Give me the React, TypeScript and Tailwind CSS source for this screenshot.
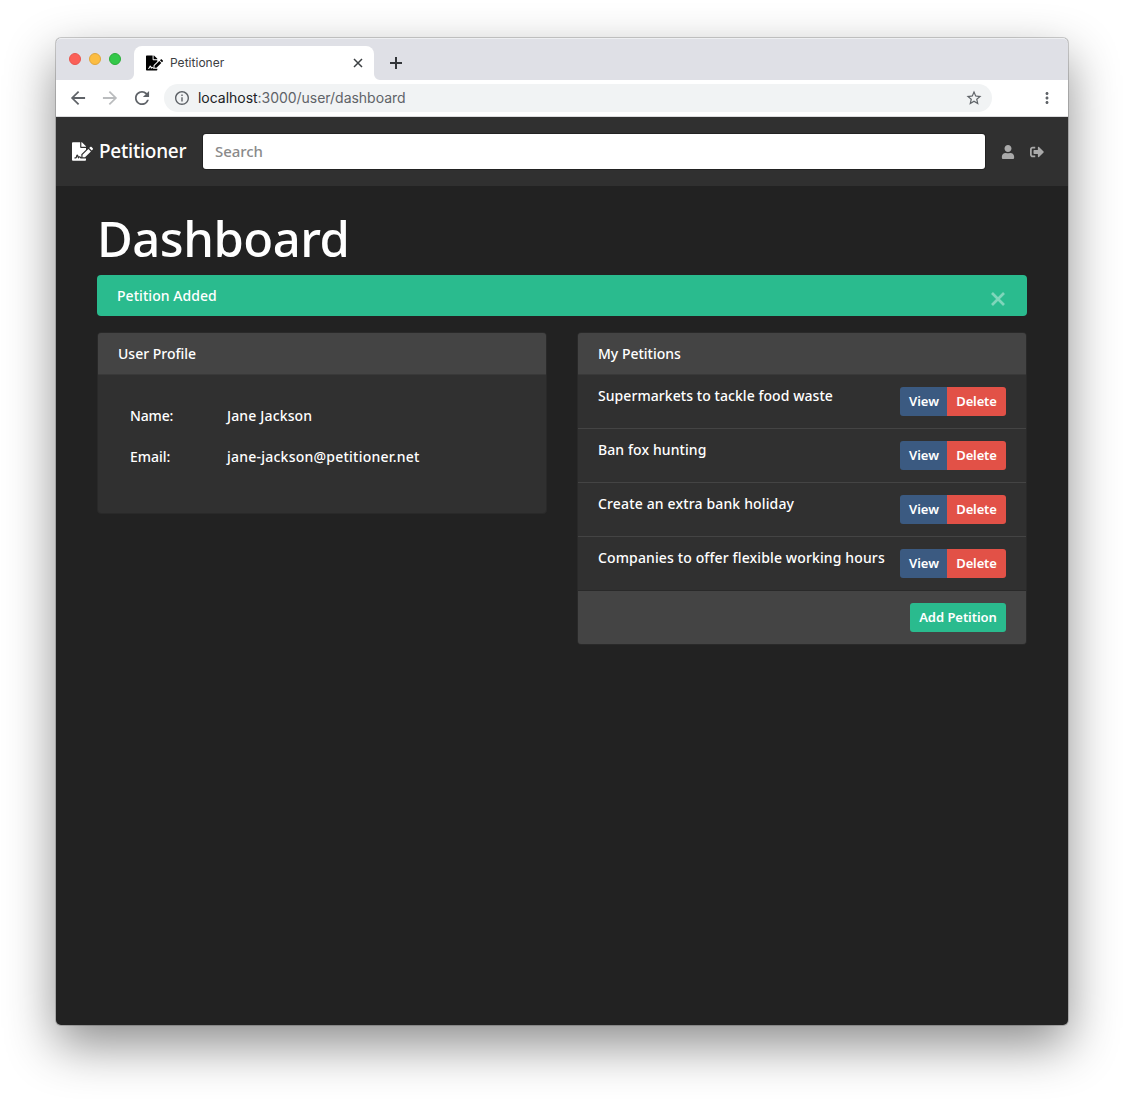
import React from "react";
import { FaFileSignature, FaSignOutAlt, FaUser } from "react-icons/fa";
import { MdArrowBack, MdArrowForward, MdRefresh, MdOutlineInfo, MdStarBorder, MdMoreVert } from "react-icons/md";

const petitions = [
  { title: "Supermarkets to tackle food waste", tracking: "tracking-[0.06px]" },
  { title: "Ban fox hunting", tracking: "tracking-[0.1px]" },
  { title: "Create an extra bank holiday", tracking: "tracking-[0.15px]" },
  { title: "Companies to offer flexible working hours", tracking: "tracking-[0.13px]" },
];

function TabStrip() {
  return (
    <div className="flex h-[42px] items-end rounded-t-[5px] bg-[#dfe0e6] font-normal shadow-[inset_0_1px_0_#eeeff2]">
      <div className="flex h-full w-[78px] items-center gap-2 pl-[13px]">
        <span className="size-3 rounded-full border border-[#e8564f] bg-[#fb6058]" />
        <span className="size-3 rounded-full border border-[#e0a63c] bg-[#fcbd42]" />
        <span className="size-3 rounded-full border border-[#2bad3a] bg-[#34c84a]" />
      </div>
      <div className="relative flex h-[34px] w-[240px] items-center rounded-t-lg bg-white pr-[11px] pl-3">
        <svg className="absolute bottom-0 -left-1.5 size-1.5" viewBox="0 0 6 6" fill="#fff"><path d="M6 0v6H0a6 6 0 0 0 6-6z" /></svg>
        <svg className="absolute -right-1.5 bottom-0 size-1.5" viewBox="0 0 6 6" fill="#fff"><path d="M0 0v6h6a6 6 0 0 1-6-6z" /></svg>
        <FaFileSignature className="h-4 w-[17px] shrink-0 text-black" />
        <span className="ml-[7px] flex-1 font-['Inter'] text-xs leading-4 tracking-[0.02px] text-[#3c4043]">Petitioner</span>
        <svg className="size-[10px]" viewBox="0 0 10 10" stroke="#3c4043" strokeWidth="1.5">
          <path d="M1 1l8 8M9 1L1 9" />
        </svg>
      </div>
      <svg className="mb-[11px] ml-4 size-3" viewBox="0 0 12 12" stroke="#33363a" strokeWidth="2">
        <path d="M6 0v12M0 6h12" />
      </svg>
    </div>
  );
}

function Toolbar() {
  return (
    <div className="flex h-[37px] items-center border-b border-[#dcdcde] bg-white pl-[13px] font-normal text-[#5f6368]">
      <MdArrowBack className="size-[18px] scale-[1.18]" />
      <MdArrowForward className="ml-[14px] size-[18px] scale-[1.18] text-[#babcbe]" />
      <MdRefresh className="ml-[14px] size-[18px] scale-[1.18]" />
      <div className="ml-[13px] flex h-7 w-[828px] items-center rounded-full bg-[#f1f3f4] pr-[9px] pl-[10px]">
        <MdOutlineInfo className="size-4 scale-105" />
        <span className="ml-2 flex-1 font-['Inter'] text-sm leading-5 tracking-[-0.03px]">
          <span className="text-[#202124]">localhost</span>:3000/user/dashboard
        </span>
        <MdStarBorder className="size-[18px]" />
      </div>
      <MdMoreVert className="ml-[46px] size-[18px]" />
    </div>
  );
}

function CardHeader({ children }: { children: React.ReactNode }) {
  return (
    <div className="h-[42px] rounded-t-[3px] border-b border-[#393939] bg-[#444] px-5 pt-[10px] leading-[22px]">
      {children}
    </div>
  );
}

export default function App() {
  return (
    <div className="h-[1099px] w-[1124px] overflow-hidden bg-white px-14 pt-[38px] font-['Noto_Sans',sans-serif] text-[14px] font-medium text-white">
      <div className="flex h-[987px] w-[1012px] flex-col rounded-[5px] bg-[#222] shadow-[0_0_0_1px_rgba(0,0,0,0.18),0_20px_50px_rgba(0,0,0,0.45)]">
        <TabStrip />
        <Toolbar />
        <nav className="flex h-[69px] items-center bg-[#303030] px-4">
          <a className="flex w-[115px] items-center whitespace-nowrap">
            <FaFileSignature className="-mt-px h-[19px] w-[21px] shrink-0" />
            <span className="-mt-[2px] ml-[6px] text-[19px] leading-6 tracking-[-0.25px]">Petitioner</span>
          </a>
          <div className="ml-4 h-[35px] w-[782px] rounded-[3px] bg-white px-3 pt-[5px] text-[15px] leading-6 tracking-[-0.05px] text-[#8a8a8a] shadow-[0_0_0_1px_#222]">
            Search
          </div>
          <FaUser className="ml-4 size-[14px] text-[#a9a9a9]" />
          <FaSignOutAlt className="ml-[15px] size-[14px] text-[#a9a9a9]" />
        </nav>
        <main className="px-[41px] pt-[23px]">
          <h1 className="h-[66px] text-[49px] leading-[58px] font-medium tracking-[-0.5px]">Dashboard</h1>
          <div className="flex h-[41px] items-start justify-between rounded bg-[#2abb8e] pr-[22px] pl-5">
            <span className="pt-[10px] leading-[22px] tracking-[0.05px]">Petition Added</span>
            <svg className="mt-[17px] size-[14px]" viewBox="0 0 14 14" stroke="#7fd6bb" strokeWidth="2.7">
              <path d="M1 1l12 12M13 1L1 13" />
            </svg>
          </div>
          <div className="mt-4 flex items-start gap-[30px]">
            <section className="h-[182px] w-[450px] rounded border border-[#292929] bg-[#303030]">
              <CardHeader>User Profile</CardHeader>
              <dl className="grid grid-cols-[97px_1fr] px-8 pt-[30px] leading-[22px]">
                <dt className="h-[41px] tracking-[-0.15px]">Name:</dt>
                <dd className="h-[41px] tracking-[0.15px]">Jane Jackson</dd>
                <dt>Email:</dt>
                <dd className="tracking-[0.23px]">jane-jackson@petitioner.net</dd>
              </dl>
            </section>
            <section className="w-[450px] rounded border border-[#292929] bg-[#303030]">
              <CardHeader>My Petitions</CardHeader>
              <ul>
                {petitions.map((p) => (
                  <li key={p.title} className="flex h-[54px] justify-between border-b border-[#444] pt-3 pr-5 pl-5 last:border-[#292929]">
                    <span className={`-mt-[2px] leading-[22px] whitespace-nowrap ${p.tracking}`}>{p.title}</span>
                    <div className="flex h-[29px] text-[13px] leading-[27px]">
                      <button className="w-[47px] rounded-l-[3px] bg-[#3b5a81] pl-px font-semibold tracking-[-0.05px]">View</button>
                      <button className="w-[59px] rounded-r-[3px] bg-[#e25147] font-semibold tracking-[-0.15px]">Delete</button>
                    </div>
                  </li>
                ))}
              </ul>
              <div className="flex h-[53px] justify-end rounded-b-[3px] bg-[#444] pt-3 pr-5">
                <button className="h-[29px] w-24 rounded-[3px] bg-[#2abb8e] text-[13px] leading-[27px] font-semibold tracking-[-0.05px]">Add Petition</button>
              </div>
            </section>
          </div>
        </main>
      </div>
    </div>
  );
}
